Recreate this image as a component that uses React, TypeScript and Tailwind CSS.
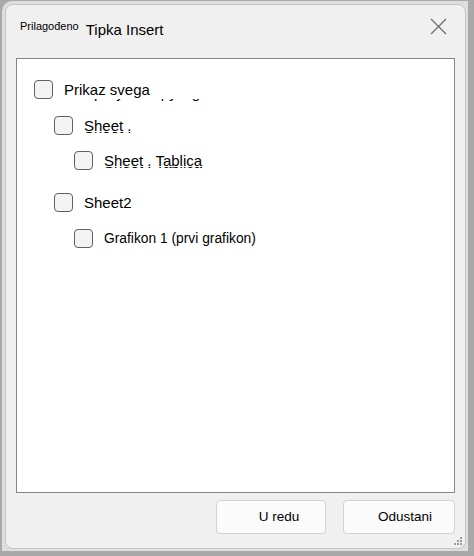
import React from 'react';

type Item = {
  label: string;
  level: number;
  mt: string;
  size?: string;
  ghost?: boolean;
  marks?: { ch: string; ml: string }[];
};

// stray descender marks under "Prikaz svega"
const prikazMarks = [
  { ch: 'p', ml: 'ml-[30px]' },
  { ch: 'y', ml: 'ml-[14px]' },
  { ch: 'p', ml: 'ml-[37px]' },
  { ch: 'y', ml: 'ml-[0px]' },
  { ch: 'g', ml: 'ml-[15px]' },
];

const items: Item[] = [
  { label: 'Prikaz svega', level: 0, mt: 'mt-[21px]', marks: prikazMarks },
  { label: 'Sheet .', level: 1, mt: 'mt-[17px]', ghost: true },
  { label: 'Sheet . Tablica', level: 2, mt: 'mt-[16px]', ghost: true },
  { label: 'Sheet2', level: 1, mt: 'mt-[23px]' },
  { label: 'Grafikon 1 (prvi grafikon)', level: 2, mt: 'mt-[17px]', size: 'text-[13.8px]' },
];

const indent = ['pl-[17px]', 'pl-[37px]', 'pl-[57px]'];

const Ghost: React.FC<{ text: string }> = ({ text }) => (
  // smeared duplicate of the label, only its lowest pixels peek out
  <span className="pointer-events-none absolute left-0 top-[15px] h-[4px] overflow-hidden whitespace-nowrap">
    <span className="-mt-[13px] block leading-[18px]">{text}</span>
  </span>
);

const Marks: React.FC<{ marks: { ch: string; ml: string }[] }> = ({ marks }) => (
  <span className="pointer-events-none absolute left-0 top-[18px] flex h-[4px] overflow-hidden whitespace-nowrap">
    {marks.map((m, i) => (
      <span key={i} className={`-mt-[15px] block leading-[18px] ${m.ml}`}>
        {m.ch}
      </span>
    ))}
  </span>
);

const Checkbox = () => (
  <span className="inline-block h-[19px] w-[19px] shrink-0 rounded-[4px] border border-[#616161] bg-[#f3f3f3]" />
);

export default function App() {
  return (
    <div
      className="h-[556px] w-[474px] overflow-hidden bg-[#a9a9a9] pl-[2px] pt-[1px]"
      style={{ fontFamily: '"Liberation Sans", Arial, sans-serif' }}
    >
      <div className="h-[550px] w-[466px] rounded-tl-[10px] bg-[#dedede] pl-[3px] pt-[3px]">
        <div className="flex h-[545px] w-[461px] flex-col rounded-[8px] border border-[#c6c6c6] bg-[#f0f0f0] text-black">
          {/* title bar */}
          <div className="flex h-[53px] shrink-0 items-start">
            <span className="ml-[14px] mt-[14px] text-[11px] leading-[14px]">Prilagođeno</span>
            <span className="ml-[7px] mt-[15px] text-[15px] leading-[20px]">Tipka Insert</span>
            <svg className="ml-auto mr-[18px] mt-[13px]" width="17" height="17" viewBox="0 0 17 17">
              <path d="M1 1 L16 16 M16 1 L1 16" stroke="#6b6b6b" strokeWidth="1.2" fill="none" />
            </svg>
          </div>

          {/* tree list */}
          <div className="mx-[10px] h-[435px] shrink-0 border border-[#858585] bg-white">
            {items.map((it) => (
              <div key={it.label} className={`flex items-center ${indent[it.level]} ${it.mt}`}>
                <Checkbox />
                <span
                  className={`relative ml-[11px] whitespace-nowrap ${it.size ?? 'text-[15px]'} leading-[18px] text-black`}
                >
                  {it.label}
                  {it.ghost && <Ghost text={it.label} />}
                  {it.marks && <Marks marks={it.marks} />}
                </span>
              </div>
            ))}
          </div>

          {/* buttons */}
          <div className="relative flex flex-1 items-start justify-end gap-[17px] pr-[10px] pt-[7px]">
            <button className="h-[34px] w-[110px] rounded-[4px] border border-[#d2d2d2] bg-[#fbfbfb] pl-[16px] text-[13.5px] text-black">
              U redu
            </button>
            <button className="h-[34px] w-[112px] rounded-[4px] border border-[#d2d2d2] bg-[#fbfbfb] pl-[12px] text-[13.5px] text-black">
              Odustani
            </button>
            <svg className="absolute bottom-[2px] right-[2px]" width="10" height="10" viewBox="0 0 10 10">
              <g fill="#9a9a9a">
                <rect x="7" y="1" width="2" height="2" />
                <rect x="4" y="4" width="2" height="2" />
                <rect x="7" y="4" width="2" height="2" />
                <rect x="1" y="7" width="2" height="2" />
                <rect x="4" y="7" width="2" height="2" />
                <rect x="7" y="7" width="2" height="2" />
              </g>
            </svg>
          </div>
        </div>
      </div>
    </div>
  );
}
